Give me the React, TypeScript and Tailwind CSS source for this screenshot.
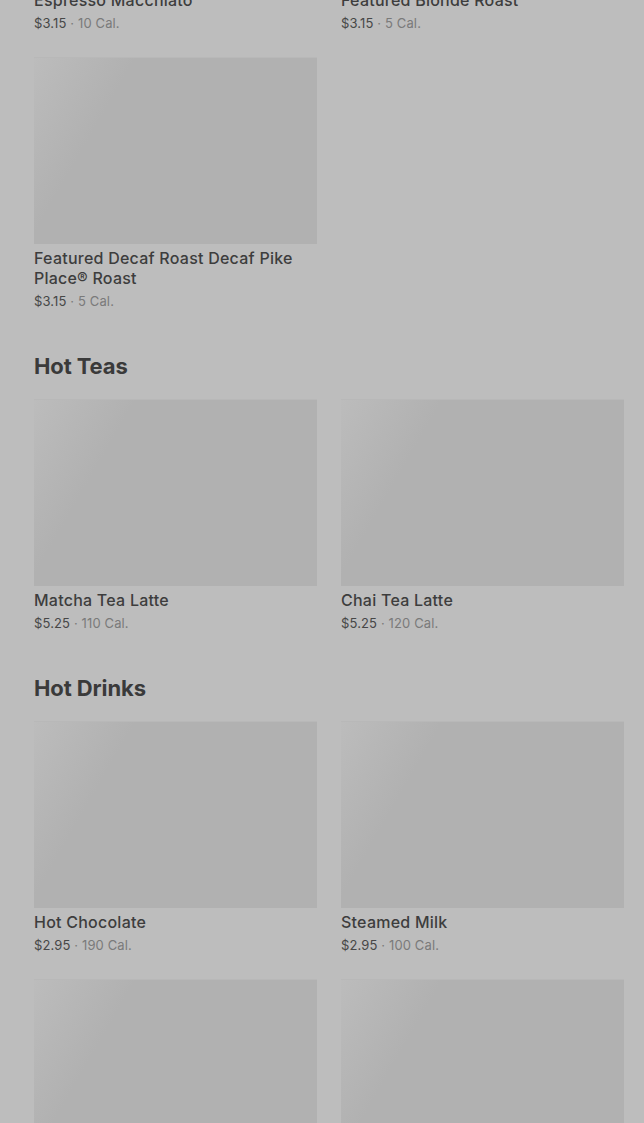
type Item = { name: string; price: string; cal: string };

const coffee: Item[] = [
  { name: "Espresso Macchiato", price: "$3.15", cal: "10 Cal." },
  { name: "Featured Blonde Roast", price: "$3.15", cal: "5 Cal." },
  { name: "Featured Decaf Roast Decaf Pike Place® Roast", price: "$3.15", cal: "5 Cal." },
];

const teas: Item[] = [
  { name: "Matcha Tea Latte", price: "$5.25", cal: "110 Cal." },
  { name: "Chai Tea Latte", price: "$5.25", cal: "120 Cal." },
];

const drinks: Item[] = [
  { name: "Hot Chocolate", price: "$2.95", cal: "190 Cal." },
  { name: "Steamed Milk", price: "$2.95", cal: "100 Cal." },
  { name: "Caffè Misto", price: "$3.45", cal: "110 Cal." },
  { name: "Vanilla Crème", price: "$3.95", cal: "200 Cal." },
];

function Card({ item }: { item: Item }) {
  return (
    <div className="flex flex-col">
      <div className="h-[187px] w-full bg-[#b1b1b1] bg-[linear-gradient(120deg,#bcbcbc_0%,#b6b6b6_14%,#b1b1b1_26%,#b1b1b1_100%)] border-t border-[#b8b8b8]" />
      <div className="mt-1 text-[16px] leading-5 font-medium tracking-[0.015em] text-[#3d3d3d]">
        {item.name}
      </div>
      <div className="mt-1 text-[13px] leading-[18px] tracking-[0.01em]">
        <span className="text-[#474747]">{item.price}</span>
        <span className="text-[#7a7a7a]"> · {item.cal}</span>
      </div>
    </div>
  );
}

function Grid({ items }: { items: Item[] }) {
  return (
    <div className="grid grid-cols-2 gap-x-6 gap-y-[25px]">
      {items.map((it) => (
        <Card key={it.name} item={it} />
      ))}
    </div>
  );
}

function Section({ title, items }: { title: string; items: Item[] }) {
  return (
    <section className="mt-[42px]">
      <h2 className="text-[22px] leading-7 font-bold tracking-[-0.005em] text-[#3a3a3a]">{title}</h2>
      <div className="mt-[19px]">
        <Grid items={items} />
      </div>
    </section>
  );
}

export default function App() {
  return (
    <div
      className="h-[1123px] overflow-hidden bg-[#bdbdbd] pl-[34px] pr-[20px]"
      style={{ fontFamily: "Inter, 'Noto Sans', sans-serif" }}
    >
      <div className="mt-[-201px]">
        <Grid items={coffee} />
      </div>
      <Section title="Hot Teas" items={teas} />
      <Section title="Hot Drinks" items={drinks} />
    </div>
  );
}
